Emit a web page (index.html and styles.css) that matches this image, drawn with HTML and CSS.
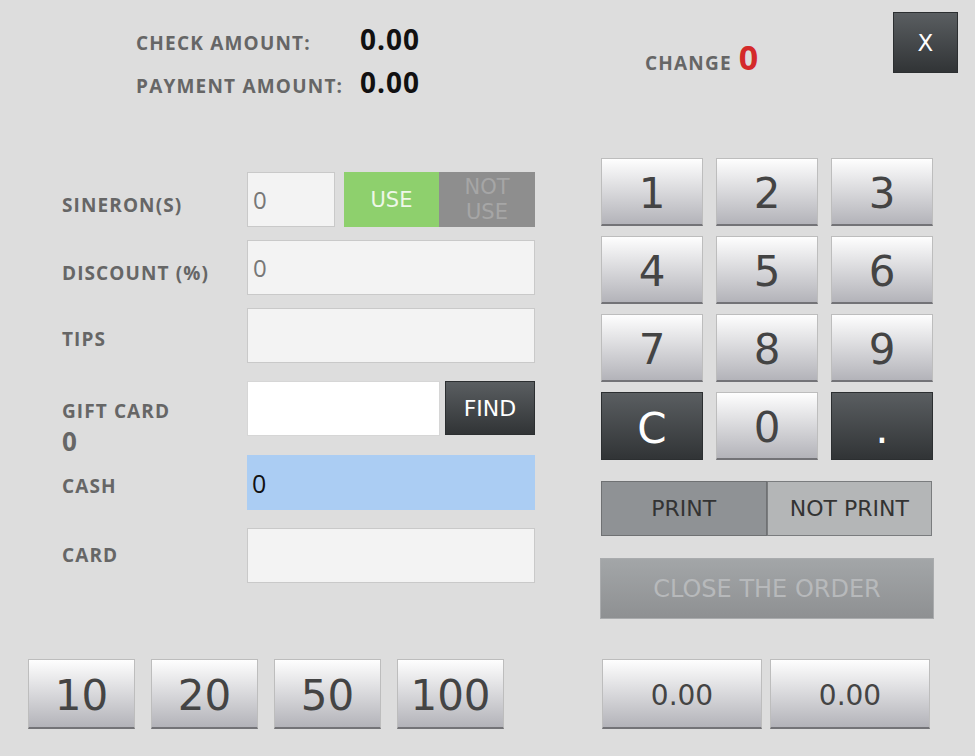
FILE: index.html
```html
<!DOCTYPE html>
<html>
  <head>
    <meta charset="utf-8" />
    <title>Payment</title>
    <link rel="stylesheet" href="styles.css">
  </head>
  <body>
    <div class="screen">
      <div class="left">
        <div class="totals">
          <div class="total-row">
            <span class="total-label">CHECK AMOUNT:</span>
            <span class="total-value">0.00</span>
          </div>
          <div class="total-row">
            <span class="total-label">PAYMENT AMOUNT:</span>
            <span class="total-value">0.00</span>
          </div>
        </div>

        <form class="pay-form">
          <div class="form-row">
            <label class="field-label">SINERON(S)</label>
            <div class="field">
              <input class="text-box small-box" type="text" value="0" />
              <div class="use-toggle">
                <button type="button" class="use-btn">USE</button>
                <button type="button" class="not-use-btn">NOT<br>USE</button>
              </div>
            </div>
          </div>
          <div class="form-row">
            <label class="field-label">DISCOUNT (%)</label>
            <div class="field">
              <input class="text-box" type="text" value="0" />
            </div>
          </div>
          <div class="form-row tips-row">
            <label class="field-label">TIPS</label>
            <div class="field">
              <input class="text-box" type="text" value="" />
            </div>
          </div>
          <div class="form-row gift-row">
            <label class="field-label">GIFT CARD<span class="gift-balance">0</span></label>
            <div class="field">
              <input class="text-box gift-box" type="text" value="" />
              <button type="button" class="btn-dark find-btn">FIND</button>
            </div>
          </div>
          <div class="form-row cash-row">
            <label class="field-label">CASH</label>
            <div class="field">
              <input class="text-box cash-box" type="text" value="0" />
            </div>
          </div>
          <div class="form-row card-row">
            <label class="field-label">CARD</label>
            <div class="field">
              <input class="text-box" type="text" value="" />
            </div>
          </div>
        </form>

        <div class="quick-cash">
          <button type="button" class="key quick-key">10</button>
          <button type="button" class="key quick-key">20</button>
          <button type="button" class="key quick-key">50</button>
          <button type="button" class="key quick-key">100</button>
        </div>
      </div>

      <div class="right">
        <div class="change-bar">
          <div class="change">
            <span class="change-label">CHANGE</span>
            <span class="change-value">0</span>
          </div>
          <button type="button" class="btn-dark close-btn">X</button>
        </div>

        <div class="keypad">
          <button type="button" class="key">1</button>
          <button type="button" class="key">2</button>
          <button type="button" class="key">3</button>
          <button type="button" class="key">4</button>
          <button type="button" class="key">5</button>
          <button type="button" class="key">6</button>
          <button type="button" class="key">7</button>
          <button type="button" class="key">8</button>
          <button type="button" class="key">9</button>
          <button type="button" class="btn-dark key-dark">C</button>
          <button type="button" class="key">0</button>
          <button type="button" class="btn-dark key-dark">.</button>
        </div>

        <div class="print-toggle">
          <button type="button" class="print-btn active">PRINT</button>
          <button type="button" class="print-btn">NOT PRINT</button>
        </div>

        <button type="button" class="close-order">CLOSE THE ORDER</button>

        <div class="amounts">
          <button type="button" class="key amount-key">0.00</button>
          <button type="button" class="key amount-key">0.00</button>
        </div>
      </div>
    </div>
  </body>
</html>
```

FILE: styles.css
```css
body {
  margin: 0;
  padding: 0;
  background: #dddddd;
  font-family: "Open Sans", "Noto Sans", Arial, sans-serif;
}

button {
  font-family: "DejaVu Sans", Verdana, sans-serif;
  cursor: pointer;
  padding: 0;
}

.screen {
  width: 975px;
  height: 756px;
  display: flex;
  overflow: hidden;
}

.left {
  width: 560px;
}

/* top totals */
.totals {
  padding: 19px 0 0 136px;
}

.total-row {
  display: flex;
  align-items: baseline;
  height: 40px;
  line-height: 40px;
  margin-bottom: 3px;
}

.total-label {
  width: 224px;
  font-size: 19px;
  font-weight: 700;
  letter-spacing: 1.2px;
  color: #666;
}

.total-value {
  font-size: 28px;
  font-weight: 700;
  letter-spacing: 1px;
  color: #111;
}

/* form */
.pay-form {
  margin-top: 70px;
  padding-left: 62px;
}

.form-row {
  display: flex;
  height: 55px;
  margin-bottom: 13px;
}

.tips-row {
  margin-bottom: 18px;
}

.gift-row {
  margin-bottom: 19px;
}

.cash-row {
  margin-bottom: 18px;
}

.field-label {
  width: 185px;
  padding-top: 20px;
  font-size: 19px;
  font-weight: 700;
  letter-spacing: 1.1px;
  color: #666;
  box-sizing: border-box;
  white-space: nowrap;
}

.tips-row .field-label,
.cash-row .field-label {
  padding-top: 18px;
}

.gift-row .field-label {
  padding-top: 17px;
  line-height: 26px;
}

.card-row .field-label {
  padding-top: 14px;
}

.gift-balance {
  display: block;
  margin-top: 2px;
  font-size: 26px;
  line-height: 30px;
}

.field {
  display: flex;
  width: 288px;
}

.text-box {
  width: 100%;
  height: 55px;
  box-sizing: border-box;
  margin: 0;
  padding: 0 5px;
  border: 1px solid #c9c9c9;
  background: #f3f3f3;
  font-family: "Open Sans", "Noto Sans", sans-serif;
  font-size: 24px;
  color: #777;
  outline: none;
}

.small-box {
  width: 88px;
  flex: none;
}

.use-toggle {
  display: flex;
  margin-left: 9px;
  flex: 1;
}

.use-btn {
  width: 95px;
  border: none;
  background: #8ed06d;
  color: #eef7e8;
  font-size: 21px;
}

.not-use-btn {
  flex: 1;
  border: none;
  background: #8e8e8e;
  color: #a6a6a6;
  font-size: 21px;
  line-height: 25px;
}

.gift-box {
  width: 193px;
  flex: none;
  background: #fff;
  border-color: #d6d6d6;
}

.find-btn {
  flex: 1;
  margin-left: 5px;
  height: 54px;
  font-size: 22px;
}

.cash-box {
  background: #abcdf3;
  border: none;
  font-size: 25px;
  color: #111;
}

/* buttons */
.btn-dark {
  border: 1px solid #2c2f31;
  background: linear-gradient(#5a5e61, #313436);
  color: #fff;
}

.key {
  padding-top: 4px;
  border: 1px solid #bdbdbd;
  border-bottom: 2px solid #737377;
  background: linear-gradient(#fefefe, #b3b3b9);
  color: #444;
  font-size: 42px;
}

.key-dark {
  padding-top: 4px;
  font-size: 42px;
}

.quick-cash {
  display: flex;
  gap: 16px;
  margin-top: 76px;
  padding-left: 28px;
}

.quick-key {
  width: 107px;
  height: 70px;
  font-size: 42px;
}

/* right side */
.right {
  width: 374px;
  padding-left: 41px;
}

.change-bar {
  display: flex;
  height: 73px;
  padding-top: 12px;
  box-sizing: border-box;
}

.change {
  margin: 25px 0 0 44px;
  width: 248px;
  height: 40px;
  display: flex;
  align-items: baseline;
  gap: 7px;
  line-height: 40px;
}

.change-label {
  font-size: 19px;
  font-weight: 700;
  letter-spacing: 1.2px;
  color: #666;
}

.change-value {
  font-size: 34px;
  font-weight: 700;
  color: #d42a2a;
}

.close-btn {
  width: 65px;
  height: 61px;
  font-size: 23px;
}

.keypad {
  margin-top: 85px;
  width: 332px;
  display: grid;
  grid-template-columns: repeat(3, 102px);
  grid-auto-rows: 68px;
  column-gap: 13px;
  row-gap: 10px;
}

.print-toggle {
  display: flex;
  margin-top: 21px;
  width: 331px;
  height: 55px;
}

.print-btn {
  flex: 1;
  border: 1px solid #7a7c7e;
  background: #b4b6b7;
  color: #333;
  font-size: 22px;
}

.print-btn.active {
  background: #8f9295;
  border-color: #6f7173;
}

.close-order {
  display: block;
  margin: 22px 0 0 -1px;
  width: 334px;
  height: 61px;
  border: 1px solid #a9abad;
  background: linear-gradient(#a3a6a8, #8e9092);
  color: #b7b9bb;
  font-size: 24px;
}

.amounts {
  display: flex;
  gap: 8px;
  margin-top: 40px;
  padding-left: 1px;
}

.amount-key {
  width: 160px;
  height: 70px;
  font-size: 28px;
}
```
